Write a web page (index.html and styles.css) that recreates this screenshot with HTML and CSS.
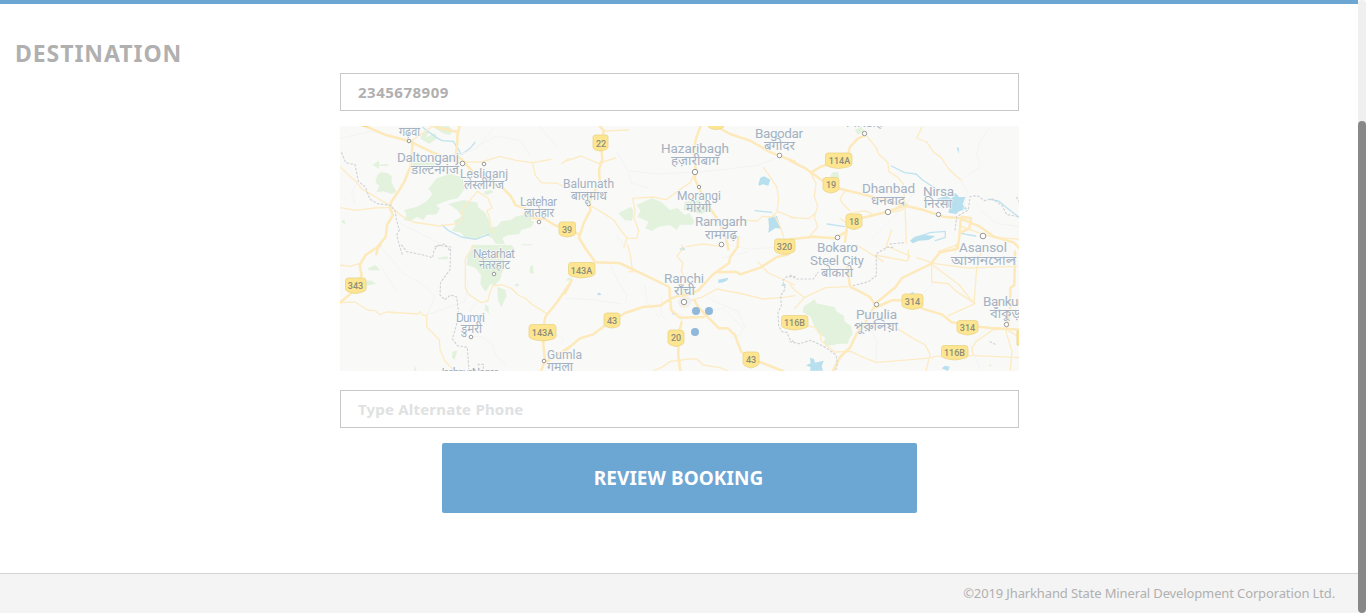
FILE: index.html
```html
<!DOCTYPE html>
<html lang="en">
<head>
<meta charset="utf-8">
<title>Review Booking</title>
<link rel="stylesheet" href="styles.css">
</head>
<body>
<div class="window">
<div class="page">
  <main class="content">
    <h2 class="heading">DESTINATION</h2>
    <form class="form">
      <input class="field" type="text" value="2345678909">
      <svg class="map" viewBox="340 126 679 245" width="679" height="245">
        <rect x="340" y="126" width="679" height="245" fill="#f9f9f8"/>
        <!-- north-west -->
        <g transform="translate(340 120) scale(.33333)">
          <path class="park" d="M97 134l20-12v12l30-2-5 6-25 0v9zM112 165l10-8 20 2 14 10-2 18 15 28-14 7-24-8-22 3 9-20-12-10zM220 128l80-2-15 10-70 3zM240 55l14-24 14 5-10 16 28-12 6 14-24 18zM275 18l50 0 14 15-10 12-22-6zM290 175l40-13 38 10 5 35-20 28-25 5-40 15 12 10-10 18-30 2-10 15-18-10-22 14-18-4 8-16-8-14 40-10 30-18 15-20-12-15zM325 252l45-12 42 8 2 14 22 16 12 24 2 20 20-2 14-16 30-5 15-10 22-4 5-12 22 14-5 14 10 5-8 15-30 8-8 14-30 2-20 8 8 20-28-2-10-16-25-12-24 15-30-2-15-18-28-6 12-16-5-14 24-12-14-20z"/>
          <path class="park" d="M4 307l8-10 5 16zM545 373h30v3h-30zM433 214l20-4 8 6-18 8-10-3z"/>
          <path class="water" d="M248 22l40 30 18 10 34 2 18 28 4 12M405 67l-15 18-24 18M306 315l18 16 40 20 42 7 40-15"/>
          <path class="faint" d="M0 55l90-20 65 10M45 195l-10 25 10 30M290 130l120-45 50-60M410 80l60-32 72 14 28 46M600 20l50 60M180 310l120 60"/>
          <path class="road" d="M0 140l20 20 25 22 22 26 38 22 50 30M0 263l48 8 56-7 50-2M154 262l28 24 36 20 80 12 60-8 14-48 40-48 32 20 12 30-15 8 8 22 4 24 8 22M366 126l60 0 52-17 50 12 50 7 55-10M665 131l20-15M578 130l8 36 18 22 48 2 30 14M215 62l65-44"/>
          <path class="highway" d="M75 18l65 28 67 17 70 34 90 34M218 65l-5 70-20 50-15 25-24 35-4 20 9 20-18 30-4 35-22 28-6 25M270 15l40 12 40 8M358 20l-6 28 0 22-5 36 18 12 38 42 50 20 14 18 20 5 25 25 15 28 30 10 20 28 38 3 28 18 40 15"/>
          <path class="border" d="M5 98l12 30 28 6 10 50 22 18 12 35 24 14 38 5 14 16 5 30 8 28-8 15 8 30 10 32M285 380l30-8 16 22"/>
        </g>
        <!-- north -->
        <g transform="translate(565 120) scale(.33333)">
          <path class="park" d="M160 280l38-20 8 14-5 28-22-2zM215 255l45-20 28 10 27 25 22-6 22 20 15-4 14 24-5 10-38 0-10 16-20-15-36 6-18 12-20-8 10-20-34-15 10-18zM360 245l40-5 35 28-25 14-55-12z"/>
          <path class="waterfill" d="M580 193l6-20 12-4 18 10-6 18-16-4-12 4zM610 294l26-6 8 26 4 12-16-2-22 14 2-18zM342 387l14-6 5 9z"/>
          <path class="faint" d="M155 96l34 56 90 10 130-6 170-20 60-25M190 160l10 30 50 14M150 340l30 38M480 370l70 18 130-10"/>
          <path class="road" d="M0 124l48-16 52 22 52-16M80 258l42 26 24 16 22 32 18 22-10 30M186 355l30 0 5-22-15-42 5-16-8-40 60-4 40 8 50-36 24-16 10-26M595 142l20 28 20 30 6 36-5 40-16 15-28-2-15 14-34-2M640 275l50 20M628 285l18 35 10 32M470 380l-54-8-54 8M190 30l-75 3"/>
          <path class="highway" d="M104 18l12 14-8 46 4 40-10 30 2 35-30 60 2 28-20 38-14 45 20 32M45 345l-35-20M407 18l-14 38-8 40 8 55-4 25 12 25 24 50 32 45 25 55 8 37M455 20l40 22 60 20 62 35 72 28"/>
          <path class="water" d="M570 272l50 5"/>
        </g>
        <!-- north-east -->
        <g transform="translate(790 120) scale(.33333)">
          <path class="park" d="M122 166l8-10h14l4 14-14 10-10-2zM195 30l18-10 10 12-20 12z"/>
          <path class="waterfill" d="M440 236l30-8 14 8 12-18 12 14 18-2-8 24 14 12-25 8-8 8-24-4 4-15-18-12zM500 84l6-2 1 20zM360 362l14-12 22-6 40 4-20 12-30 2-18 8z"/>
          <path class="water" d="M304 138l40 20 34 4 20 18 36 24M112 312l52 8M370 356l50-18 46-4 0 18-30 10M512 340l45 8M600 238l26 5 26 22 36 28"/>
          <path class="faint" d="M512 180l60-40-12-36 10-40 30-44M512 180l20 34-12 60M345 255l30-40M340 262l-100 100M570 270l50 40 70 10"/>
          <path class="road" d="M230 48l28 34 8 20 28 26 2 26 28 18 16 20 5 66 4 112M396 22l-16 32 30 12 22 32 22 15 22 34 36 33M60 155l18 36-5 38 10 30-10 32 10 30-22 26M0 292l55 4 18-14M345 258l-10 12-45 10M180 272l-18-16-12-20 14-22M150 295l22 15M180 280l45-8 22 10M510 318l55 20 50 15 70 4M305 330l-20 60"/>
          <path class="highway" d="M0 122l48 24 50 36 52 24 80 20 110 30 60 14 60 20 50 5 60 25 42 30 60 18 20 20M68 155l22-14 82-28 8-32 24-26 20-8M0 358l70-8 65 5 34-20 4-45M170 330l-5 35M200 298l90-22 60-22M512 300l-4 50-5 35-10 5M515 290l28 5-5 30-24 12M450 12h50"/>
          <path class="border" d="M495 330l5-40 35-20 5-40 22-3 22 15 22-6 30 20 14 28 38 6M680 232l6 12M300 372l45-4"/>
        </g>
        <!-- south-west -->
        <g transform="translate(340 245) scale(.33333)">
          <path class="park" d="M395 0h120l10 14-28 12-8 50-10 30-14 14-14-2-14 22-16-22 2-28-18-22-25-8 2-22 8-18zM472 125l24 10 4 18-16 34-10-22zM436 178l10 8v20l-12-12zM570 65l9-6 2 28-13-4zM523 120l10-5 5 6-9 5zM84 70l22-10 15 16-35 0zM76 107l20 0 12 10-32 5zM295 38l28-4v9h-28zM337 320l15-4-8 28-8-6zM225 362l5 15h-8z"/>
          <path class="faint" d="M120 3l35 40 30 40 55 30 45 40-20 48-5 8 115-40 10-60M120 60l50 80M390 275h35l32 22 10 30 30 35M390 200l20-30M630 260l40 20-6 14"/>
          <path class="road" d="M0 60l30 4 28-8M0 173l45-2 38 24 22 2 15 12 20-8 95 6 5-8 10 12 10 0 0 35 38 38 2 30 15 35 28 28M405 0l-29 40 0 90 12 20 36 23 20-5 4-20 10-26 30-2 26 10 20 20 22 10 20 18 45 28"/>
          <path class="highway" d="M122 0l-45 30-18 30 6 30-20 45-45 38M690 115l-38 55-36 45-4 25-2 60 5 46-12 32M620 350l70-45"/>
          <path class="border" d="M185 0l15 20 50 10 28 8 4-22 12-15 38 5-2 68-28 38-2 38 14 14 18-14 18 6 5 40-6 46-12 40 15 20 30 5 5 70M415 372l0-14h15v14"/>
        </g>
        <!-- south -->
        <g transform="translate(565 245) scale(.33333)">
          <path class="urban" d="M345 160l20-10 18 16-12 20-25 2-8-16z"/>
          <path class="park" d="M5 102l12-6v10l-14 2z"/>
          <path class="waterfill" d="M95 147l8-4 7 6-9 2zM322 195l8 10-3 6-5-4zM460 104l30-6-3 8-12 6-15 2zM648 119l15-2-2 5-10 1zM345 15l6-6 5 8z"/>
          <path class="faint" d="M138 60l20 50 28 40-4 20M0 160l90 5 80 12M290 160l-2 50 20 20M310 190l40 20-8 100M395 200l80-10 60 60-10 20-30 8M380 148l70-60M430 160l90 40 20 50M240 120l5 50 40 50M470 40l80-20"/>
          <path class="road" d="M188 0l8 30 7 50-12 0M350 0l2 12-16 22 18 20-5 22 10 28-6 48M380 165l30-8 45-25 65 12 75 18 60-5 35-5M580 52l30 32 42 18 36 18M265 378l30-14 20-14 55-8 25 0 20 18 50 8 25 10M358 150l0 38"/>
          <path class="highway" d="M55 0l12 18 24 34 72 2 80 38 70 34 2 32 4 38 25 22 72-2M0 318l45-38 40-12 45-34 50-30 55-18 50-4 30-20 20-8 40-6 25-12 42-46 50-36 4-18 22-30 2-30M462 82l50-2 14 8 60-20 50-32 35-8M388 165l12 22 24 25 38 38 26 0 22 20 18 50 30 20 50 20 50 20M350 232l-10 35 0 65 6 46M0 145l20-40"/>
          <path class="border" d="M690 95h-25l-12 12 8 25-14 20 2 30-10 20 2 40 10 18 15 2 8 20 15 10"/>
        </g>
        <!-- south-east -->
        <g transform="translate(790 245) scale(.33333)">
          <path class="park" d="M40 185l35-22 3 12 28 6 28 5 6 14 22 12 2 18 20 14 4 24-10 12-4 16-28 0-35 8-10-12 5-14-22-14-14-26-8-22-24-14zM596 360l10-2-5 8z"/>
          <path class="waterfill" d="M60 338l12 4 3 11 26-6-6 16 4 14H60l2-10-14-6 14-6zM358 148l10-7 7 6-7 6zM455 370l10-8 14 3-5 13z"/>
          <path class="faint" d="M260 190l-15 60 14 40v60M475 115l30 28M430 115l-70 70M600 240l-60 60 30 70"/>
          <path class="road" d="M0 118l14 18 30 22-30 32M5 220v18l70 8 16 20 2 20 40 35 50-2 30 15 45 18 80-6 90-8M42 158l65-30 65-3M425 55l0 56 50 5 20 20 60 40-80 36M445 20l55-20M428 60l80 60 44 56 8-105 20-70M320 250l50 30 36 20 14 28-12 50M430 335l80-5M520 335l30-4-5-20 14-22 50-35 38-2 50 30M555 332l135 6M648 195l0 65 18 60-5 55M255 30l95 18 10-15-70-30M355 15l0 30M380 38l45 15M430 55l100 14 150-5M200 0l80 50"/>
          <path class="highway" d="M500 0l0 12-50 10-28 35-86 42-20 28-54 44-25 40-12 25-25 30-20 42-30 28-20 40M172 65l8 60 30 15 30 16 20 30 45-20 32 0M395 190l60 18 30 24 65 12 50 5 90 5M675 20l-2 100-12 8 0 60-10 58"/>
          <path class="border" d="M0 90l20 12 50 0 14-20M190 122l45-12 24-18 0-65 30-20 25 0M0 290l28 6 35-10 45 22 30 22 4 25-4 18M600 290l20 10"/>
        </g>
        <g class="shields">
          <path d="M596 135h10q2 0 2 2v10q0 3-8 4-7-1-7-4v-10q0-2 3-2zM561.500 222h12q2 0 2 2v9q0 3-8.500 4-8-1-8-4v-9q0-2 2.500-2zM571 262.500h21q3 0 3 3v8q0 3-13.500 4.500-13-1.500-13-4.500v-8q0-3 2.500-3zM532 324.500h21q3 0 3 3v9q0 3-13 4.500-14-1.500-14-4.500v-9q0-3 3-3zM607 313h10q3 0 3 3v8q0 3-8 4-8-1-8-4v-8q0-3 3-3zM671 330h9q4 0 4 3v9q0 3-8 4.500-8-1.500-8-4.500v-9q0-3 3-3zM746 352h10q3 0 3 3v8q0 3-8 5-8-2-8-5v-8q0-3 3-3zM348 278h15q3 0 3 3v8q0 3-10.500 4.500-10-1.500-10-4.500v-8q0-3 2.500-3zM777 239h15q3 0 3 3v8q0 3-10.500 4.500-10-1.500-10-4.500v-8q0-3 2.500-3zM828 153h21q3 0 3 3v8q0 3-13.500 4.500-13-1.500-13-4.500v-8q0-3 2.500-3zM826 177.500h10q3 0 3 3v8q0 3-8 4.500-8-1.500-8-4.500v-8q0-3 3-3zM849 214h10q3 0 3 3v8q0 3-8 4.500-8-1.500-8-4.500v-8q0-3 3-3zM784 315.500h21q3 0 3 3v7q0 3-13.500 4.500-13-1.500-13-4.500v-7q0-3 2.500-3zM905 294h15q3 0 3 3v8q0 3-10.500 4.500-10.500-1.500-10.500-4.500v-8q0-3 3-3zM960 320.500h15q3 0 3 3v7q0 3-10.500 4.500-10.500-1.500-10.500-4.500v-7q0-3 3-3zM944 345.500h21q3 0 3 3v7q0 3-13.500 4.500-13-1.500-13-4.500v-7q0-3 2.500-3zM1017 331h10v14h-10zM708 120h16v6q-1 3-8 3.500-7-.5-8-3.500zM360 120h10v5q-1 1.500-5 1.500t-5-1.500z"/>
          <text x="601" y="146.500">22</text><text x="567" y="233">39</text><text x="581.500" y="274">143A</text><text x="542.500" y="336">143A</text><text x="612" y="324">43</text><text x="676" y="341">20</text><text x="751" y="363">43</text><text x="355.500" y="289">343</text><text x="784.500" y="250">320</text><text x="839.500" y="164">114A</text><text x="831" y="188">19</text><text x="854" y="225">18</text><text x="794.500" y="326">116B</text><text x="912.500" y="305">314</text><text x="967.500" y="331">314</text><text x="954.500" y="356">116B</text>
        </g>
        <g class="towns">
          <circle cx="409" cy="141" r="1.800"/><circle cx="462.500" cy="163.500" r="2.300"/><circle cx="484" cy="164" r="1.800"/><circle cx="539" cy="222" r="1.800"/><circle cx="588.500" cy="204" r="1.800"/><circle cx="695" cy="172" r="2.700"/><circle cx="699" cy="187" r="1.700"/><circle cx="721.500" cy="244.500" r="2.300"/><circle cx="779.500" cy="155.500" r="2.300"/><circle cx="864.500" cy="133.500" r="2.200"/><circle cx="888" cy="212" r="2.700"/><circle cx="938.500" cy="214.500" r="2.200"/><circle cx="837.500" cy="237.500" r="2.300"/><circle cx="983" cy="236" r="2.800"/><circle cx="494" cy="274" r="1.800"/><circle cx="471" cy="337" r="1.800"/><circle cx="544" cy="361" r="1.800"/><circle cx="684" cy="302" r="2.700"/><circle cx="876.500" cy="304.500" r="2.200"/><circle cx="1006.500" cy="324.500" r="2.200"/>
        </g>
        <g class="labels">
          <text x="397" y="162" textLength="62">Daltonganj</text><text x="661" y="153" textLength="68">Hazaribagh</text><text x="755" y="138" textLength="48">Bagodar</text><text x="695" y="226" textLength="52">Ramgarh</text><text x="862" y="193" textLength="53">Dhanbad</text><text x="923" y="196" textLength="31">Nirsa</text><text x="817" y="252" textLength="41">Bokaro</text><text x="810" y="265" textLength="54">Steel City</text><text x="959" y="252" textLength="48">Asansol</text><text x="664" y="283" textLength="40">Ranchi</text><text x="856" y="319" textLength="41">Purulia</text><text x="983" y="306" textLength="46">Bankura</text>
          <g class="small"><text x="460" y="178" textLength="48">Lesliganj</text><text x="520" y="206" textLength="37">Latehar</text><text x="563" y="188" textLength="51">Balumath</text><text x="677" y="200" textLength="44">Morangi</text><text x="473" y="258" textLength="42">Netarhat</text><text x="456" y="322" textLength="29">Dumri</text><text x="547" y="359" textLength="35">Gumla</text><text x="438" y="377" textLength="60">Jashpur Nagar</text></g>
          <g class="local"><text x="399" y="136" textLength="21" lengthAdjust="spacingAndGlyphs">गढ़वा</text><text x="411" y="174" textLength="48" lengthAdjust="spacingAndGlyphs">डाल्टनगंज</text><text x="464" y="189" textLength="40" lengthAdjust="spacingAndGlyphs">लेस्लीगंज</text><text x="524" y="217" textLength="30" lengthAdjust="spacingAndGlyphs">लातेहार</text><text x="571" y="200" textLength="36" lengthAdjust="spacingAndGlyphs">बालूमाथ</text><text x="671" y="165" textLength="48" lengthAdjust="spacingAndGlyphs">हज़ारीबाग</text><text x="764" y="150" textLength="31" lengthAdjust="spacingAndGlyphs">बगोदर</text><text x="686" y="212" textLength="25" lengthAdjust="spacingAndGlyphs">मोरंगी</text><text x="705" y="239" textLength="32" lengthAdjust="spacingAndGlyphs">रामगढ़</text><text x="871" y="205" textLength="34" lengthAdjust="spacingAndGlyphs">धनबाद</text><text x="924" y="208" textLength="28" lengthAdjust="spacingAndGlyphs">निरसा</text><text x="821" y="277" textLength="32" lengthAdjust="spacingAndGlyphs">बोकारो</text><text x="951" y="265" textLength="65" lengthAdjust="spacingAndGlyphs">আসানসোল</text><text x="479" y="269" textLength="31" lengthAdjust="spacingAndGlyphs">नेतरहाट</text><text x="461" y="333" textLength="21" lengthAdjust="spacingAndGlyphs">डुमरी</text><text x="547" y="371" textLength="26" lengthAdjust="spacingAndGlyphs">गुमला</text><text x="674" y="295" textLength="21" lengthAdjust="spacingAndGlyphs">राँची</text><text x="854" y="331" textLength="44" lengthAdjust="spacingAndGlyphs">পুরুলিয়া</text><text x="990" y="318" textLength="34" lengthAdjust="spacingAndGlyphs">বাঁকুড়া</text><text x="846" y="127" textLength="37" lengthAdjust="spacingAndGlyphs">गिरिडीह</text></g>
        </g>
        <g class="pins"><circle cx="696" cy="311" r="4"/><circle cx="709" cy="311" r="4"/><circle cx="695" cy="332" r="4"/></g>
      </svg>
      <input class="field" type="text" placeholder="Type Alternate Phone">
      <button class="submit" type="button">REVIEW BOOKING</button>
    </form>
  </main>
  <footer class="footer"><span class="copyright">©2019 Jharkhand State Mineral Development Corporation Ltd.</span></footer>
</div>
<div class="scrollbar"><div class="thumb"></div></div>
</div>
</body>
</html>
```
FILE: styles.css
```css
* { box-sizing: border-box; }
body { margin: 0; background: #fff; font-family: "Noto Sans", "Open Sans", sans-serif; }
.window { display: flex; height: 613px; overflow: hidden; }
.page { flex: 1; display: flex; flex-direction: column; border-top: 4px solid #6ca6d3; }
.content { flex: 1; }
.heading { margin: 31px 0 0 15px; height: 38px; width: max-content; font-size: 23px; line-height: 36px; letter-spacing: .95px; font-weight: 700; color: #b0b0b0; }
.form { width: 679px; margin: 0 0 0 340px; display: flex; flex-direction: column; align-items: center; }
.field { display: block; width: 679px; height: 38px; padding: 0 17px; border: 1px solid #c8c8c8; border-radius: 0; background: #fff; outline: 0; font: 700 15px "Noto Sans", sans-serif; letter-spacing: .5px; color: #b0b0b0; }
.field::placeholder { color: #e0e1e1; opacity: 1; letter-spacing: .2px; }
.map { display: block; margin: 15px 0 19px; }
.submit { width: 475px; height: 70px; margin-top: 15px; padding: 0 2px 0 0; border: 0; border-radius: 2px; background: #6ca6d3; color: #fff; font: 700 19px "Noto Sans", sans-serif; letter-spacing: .05px; }
.footer { height: 40px; padding: 0 23px 2px 0; border-top: 1px solid #d4d4d4; background: #f4f4f4; display: flex; justify-content: flex-end; align-items: center; }
.copyright { font-size: 13px; letter-spacing: -.13px; color: #b0b0b0; }
.scrollbar { width: 8px; padding-top: 121px; background: #f0f0f0; border-radius: 4px; }
.thumb { height: 492px; border-radius: 4px; background: #888; }

.road, .highway, .border, .faint, .water { fill: none; stroke-linejoin: round; stroke-linecap: round; }
.road { stroke: #fdebc4; stroke-width: 4; }
.highway { stroke: #fde9b9; stroke-width: 7.500; }
.border { stroke: #d3d3d8; stroke-width: 3.500; stroke-dasharray: 5 7; }
.faint { stroke: #f3f3f3; stroke-width: 3; }
.water { stroke: #bfe3f0; stroke-width: 4; }
.waterfill { fill: #b7dfed; }
.park { fill: #e2f2dc; }
.urban { fill: #f0f0f3; }
.shields path { fill: #fde68f; stroke: #ead489; stroke-width: .8; }
.shields text { font: 500 9px Roboto, sans-serif; text-anchor: middle; fill: #8d8d7c; }
.towns circle { fill: #fff; stroke: #989898; stroke-width: 1; }
.labels text { fill: #a3b1c0; stroke: #fafafa; stroke-width: 1.500px; paint-order: stroke; font-family: Roboto, "Noto Sans Devanagari", "Noto Sans Bengali", sans-serif; font-size: 13.500px; }
.labels .small text { font-size: 12px; }
.labels .local text { font-size: 12.500px; stroke-width: 1px; }
.pins { fill: #8fb8da; }
```
